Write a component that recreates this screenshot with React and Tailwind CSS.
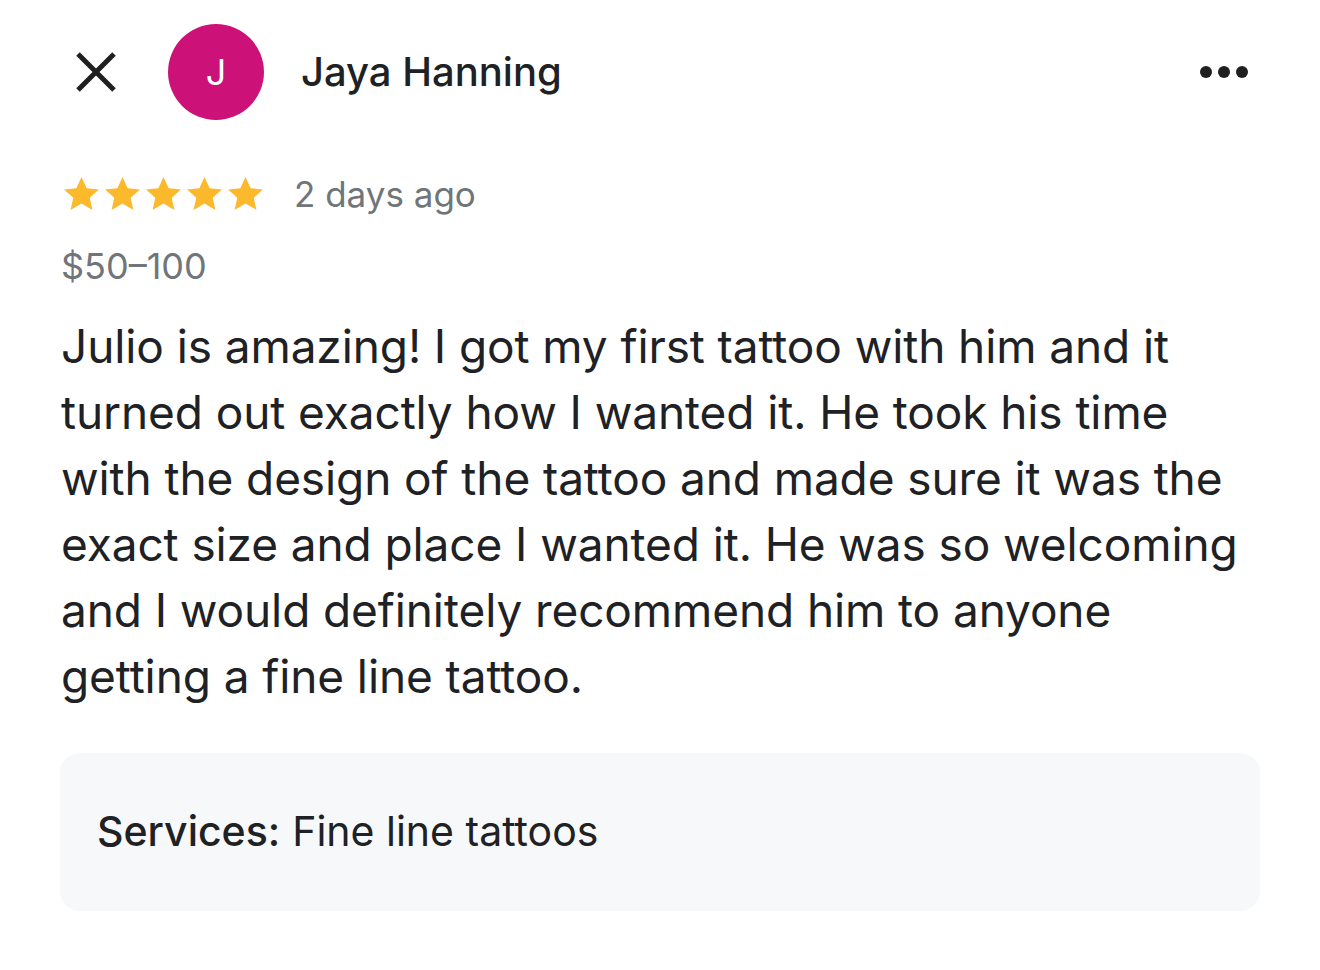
import React from "react";

const body = [
  "Julio is amazing! I got my first tattoo with him and it",
  "turned out exactly how I wanted it. He took his time",
  "with the design of the tattoo and made sure it was the",
  "exact size and place I wanted it. He was so welcoming",
  "and I would definitely recommend him to anyone",
  "getting a fine line tattoo.",
];

function Star() {
  return (
    <svg viewBox="0 0 24 24" className="h-[41px] w-[41px]">
      <path
        fill="#FBB92B"
        d="M12 1.8l3 6.6 7.2.7-5.4 4.8 1.6 7.1L12 17.3l-6.4 3.7 1.6-7.1-5.4-4.8 7.2-.7z"
      />
    </svg>
  );
}

export default function App() {
  return (
    <div
      className="min-h-[970px] w-[1320px] bg-white text-[#202124]"
      style={{ fontFamily: "Inter, Roboto, sans-serif" }}
    >
      <div className="flex h-[144px] items-center pl-[74px] pr-[72px]">
        <svg viewBox="0 0 44 44" className="h-[44px] w-[44px]">
          <path d="M4 4L40 40M40 4L4 40" stroke="#1f1f1f" strokeWidth="5" />
        </svg>
        <div className="ml-[50px] flex h-[96px] w-[96px] items-center justify-center rounded-full bg-[#CC1278] text-[36px] text-white">
          J
        </div>
        <div className="ml-[37px] text-[40px] font-medium">Jaya Hanning</div>
        <div className="ml-auto flex gap-[6px]">
          <span className="h-[12px] w-[12px] rounded-full bg-[#1f1f1f]" />
          <span className="h-[12px] w-[12px] rounded-full bg-[#1f1f1f]" />
          <span className="h-[12px] w-[12px] rounded-full bg-[#1f1f1f]" />
        </div>
      </div>

      <div className="px-[61px]">
        <div className="mt-[24px] flex items-center">
          <div className="flex">
            <Star />
            <Star />
            <Star />
            <Star />
            <Star />
          </div>
          <span className="ml-[28px] text-[35px] text-[#70757a]">2 days ago</span>
        </div>
        <div className="mt-[18px] text-[36px] text-[#70757a]">$50–100</div>

        <div className="mt-[20px] text-[46px] leading-[66px] tracking-[-0.1px]">
          {body.map((line) => (
            <div key={line}>{line}</div>
          ))}
        </div>
      </div>

      <div className="mx-[60px] mt-[44px] flex h-[158px] items-center rounded-[20px] bg-[#F7F8FA] px-[37px] text-[41px]">
        <span className="font-medium">Services:</span>
        <span className="ml-[12px]">Fine line tattoos</span>
      </div>
    </div>
  );
}
